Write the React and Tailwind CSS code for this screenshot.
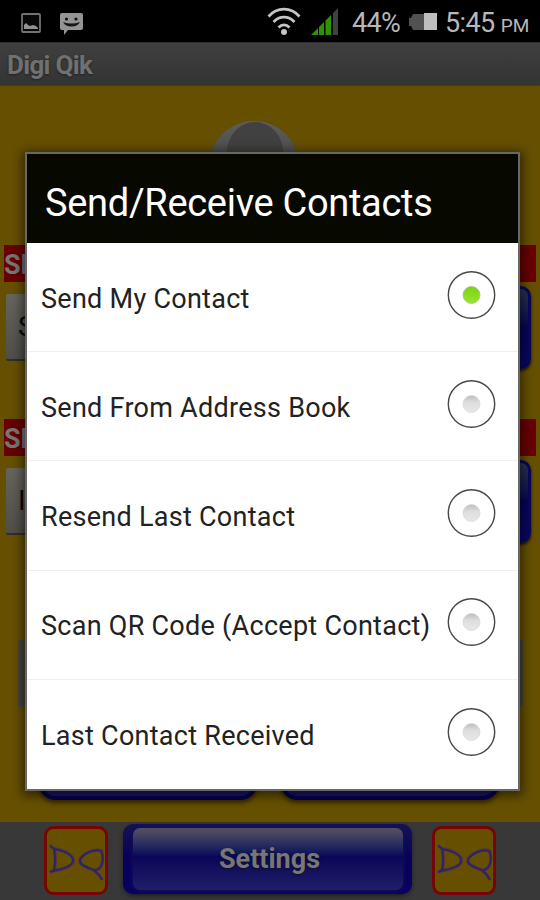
const options = [
  { label: 'Send My Contact', selected: true },
  { label: 'Send From Address Book' },
  { label: 'Resend Last Contact' },
  { label: 'Scan QR Code (Accept Contact)' },
  { label: 'Last Contact Received' },
];

function StatusBar() {
  return (
    <header className="flex h-[42px] items-center bg-black text-[#b8b8b8]">
      <svg className="mt-[3px] ml-[21px] h-[20px] w-[20px]" viewBox="0 0 20 20">
        <rect x="1" y="1" width="18" height="18" rx="1" fill="#080808" stroke="#727272" strokeWidth="1.800" />
        <path d="M3 16v-4l2-2 2 2 2 1 3-1 3 1 2 2v1z" fill="#929292" />
      </svg>
      <svg className="mt-[5px] ml-[19px] h-[22px] w-[23px]" viewBox="0 0 23 22">
        <path d="M2 0h19q2 0 2 2v13q0 2-2 2H8l-4 5v-5H2q-2 0-2-2V2q0-2 2-2z" fill="#949494" />
        <circle cx="6.500" cy="6" r="1.600" fill="#111" />
        <circle cx="16" cy="6" r="1.600" fill="#111" />
        <path d="M3 9q8.500 3 17 0-2.500 4.500-8.500 4.500T3 9z" fill="#151515" />
      </svg>
      <svg className="ml-[184px] h-[29px] w-[34px]" viewBox="0 0 34 29" fill="none" stroke="#c5c5c5" strokeWidth="2.700">
        <path d="M1.500 9.500C10-.3 24-.3 32.500 9.500M6.500 15c6-6.500 15-6.500 21 0M11.500 20.500c3.500-3.600 7.500-3.600 11 0" />
        <circle cx="17" cy="25" r="3" fill="#c5c5c5" stroke="none" />
      </svg>
      <svg className="ml-[10px] h-[27px] w-[28px]" viewBox="0 0 28 27">
        <path d="M0 27 7 20v7zM8 27v-8l5-5v13zM14.500 27V12.500L20 7v20z" fill="#2b9400" />
        <path d="M22 27V5l5-5v27z" fill="#414141" />
      </svg>
      <span className="mt-[5px] ml-[13px] w-[49px] text-[27px] leading-none tracking-[-0.700px] whitespace-nowrap">44%</span>
      <svg className="mt-[2px] ml-[8px] h-[18px] w-[28px]" viewBox="0 0 28 18">
        <path d="M4 1h12v16H4l-2-4H0V5h2z" fill="#515151" />
        <path d="M15 0h13v17H15z" fill="#bebebe" />
      </svg>
      <span className="mt-[5px] ml-[8px] text-[27px] leading-none tracking-[-0.600px] whitespace-nowrap">5:45</span>
      <span className="mt-[9px] ml-[6px] text-[19px] leading-none whitespace-nowrap">PM</span>
    </header>
  );
}

function FieldGroup({ heading, initial, first }) {
  return (
    <section className={first ? 'pt-[159px]' : 'pt-[49px]'}>
      <div className="mr-[4px] ml-[4px] flex h-[37px] items-center bg-[#680000] pt-[3px] text-[27px] font-bold text-[#777]">
        {heading}
      </div>
      <div className="mt-[4px] flex h-[84px] items-start justify-between pr-[9px] pl-[6px]">
        <div className="mt-[8px] flex h-[67px] w-[330px] items-center rounded-[2px] border-b-2 border-[#30302b] bg-linear-to-b from-[#66645d] to-[#4f4e49] pl-[12px] text-[28px] text-[#090909]">
          {initial}
        </div>
        <div className="h-[83px] w-[165px] rounded-[10px] border-[3px] border-[#08085a] bg-linear-to-b from-[#32314d] via-[#080354] to-[#0b0765] shadow-[0_2px_3px_#171307]" />
      </div>
    </section>
  );
}

function Logo() {
  return (
    <svg className="mt-[4px] h-[69px] w-[64px] shrink-0" viewBox="0 0 64 69" fill="none">
      <rect x="1.500" y="1.500" width="61" height="66" rx="8" fill="#665000" stroke="#790300" strokeWidth="2.800" />
      <g stroke="#642f3c" strokeWidth="3">
        <path d="M6 19.500 10.500 23q2 11 0 21.500L6 46.500" />
        <path d="M10 22.500C21 24 29.500 29 29.500 34.500S20 43.500 8 45" />
        <path d="M59 26C57 23.500 52 23.500 47 25S35.500 31 35.500 35 43 42 50 44.500Q55 48 58.500 54" />
        <path d="M57 25c2.500 4 2 11 .500 14-1 3-3.500 5-7 5.500" />
      </g>
      <g stroke="#27286c" strokeWidth="2.200">
        <path d="m6 19.500 4 3.500q2 11 0 21.500L6 46" />
        <path d="M10 23C20 25 29 29 29 34.500S19 43 8 45" />
        <path d="M58 26C56 24 52 24 47 25.500S36 31 36 35 43 41.500 50 44Q55 48 58 54" />
        <path d="M57.500 26c2 3 1.500 10 0 13s-3.500 5-7 5" />
      </g>
    </svg>
  );
}

function Backdrop() {
  return (
    <div className="flex h-full flex-col">
      <StatusBar />
      <div className="flex h-[44px] items-center border-t border-b border-t-[#303030] border-b-[#423b20] bg-linear-to-b from-[#3f3f3f] to-[#343434] pt-[2px] pl-[7px] text-[26px] font-bold tracking-[-0.700px] text-[#707070] [text-shadow:0_1px_2px_#222]">
        Digi Qik
      </div>
      <main className="relative h-[736px] overflow-hidden bg-[#665000]">
        <svg className="absolute top-[34px] left-[208px] h-[92px] w-[92px]" viewBox="0 0 92 92">
          <defs>
            <linearGradient id="avatar" x2="0" y2="1">
              <stop stopColor="#5d5d5d" />
              <stop offset=".5" stopColor="#484848" />
            </linearGradient>
          </defs>
          <circle cx="46" cy="46" r="45" fill="url(#avatar)" />
          <ellipse cx="47" cy="32" rx="28" ry="30" fill="#414141" />
        </svg>
        <FieldGroup heading="SEND" initial="S" first />
        <FieldGroup heading="SHARE" initial="I" />
        <div className="mt-[96px] mr-[17px] ml-[18px] h-[67px] rounded-[2px] bg-[#48473c]" />
        <div className="mt-[5px] flex justify-center gap-[22px] pr-[2px]">
          <div className="h-[88px] w-[220px] rounded-[18px] border-[4px] border-[#05004f] bg-[#1c1667] shadow-[0_3px_4px_#342900]" />
          <div className="h-[88px] w-[220px] rounded-[18px] border-[4px] border-[#05004f] bg-[#1c1667] shadow-[0_3px_4px_#342900]" />
        </div>
      </main>
      <footer className="flex h-[78px] items-start bg-[#383838] pl-[44px]">
        <Logo />
        <button className="mt-[2px] ml-[15px] flex h-[70px] w-[289px] items-center justify-center rounded-[10px] bg-[#09055b] bg-linear-to-b from-[#161255] via-[#08005a] to-[#080062] p-[4px] shadow-[0_2px_4px_#202020]">
          <span className="flex h-full w-[270px] items-center justify-center rounded-[7px] bg-linear-to-b from-[#504b60] from-[5%] via-[#0b0659] via-[46%] to-[#211d68] pt-[1px] pl-[4px] text-[27px] font-bold text-[#777] shadow-[0_0_4px_1px_#151057] [text-shadow:0_1px_2px_#111]">
            Settings
          </span>
        </button>
        <div className="ml-[20px]"><Logo /></div>
      </footer>
    </div>
  );
}

function Radio({ selected }) {
  return (
    <svg className="h-[50px] w-[50px] shrink-0" viewBox="0 0 50 50">
      <defs>
        <linearGradient id="on" x2="0" y2="1"><stop stopColor="#79d411" /><stop offset="1" stopColor="#98e52c" /></linearGradient>
        <linearGradient id="off" x2="0" y2="1"><stop stopColor="#bdbdbd" /><stop offset=".4" stopColor="#ddd" /><stop offset="1" stopColor="#e8e8e8" /></linearGradient>
      </defs>
      <circle cx="24.500" cy="24" r="23.200" fill="none" stroke="#484848" strokeWidth="1.400" />
      <circle cx="24.500" cy="24" r="8.500" fill={selected ? 'url(#on)' : 'url(#off)'} stroke={selected ? '#a8bd92' : '#d8d8d8'} strokeWidth=".8" />
    </svg>
  );
}

export default function App() {
  return (
    <div className="relative h-[900px] w-[540px] overflow-hidden font-[Roboto,sans-serif]">
      <Backdrop />
      <div role="dialog" className="absolute top-[152px] left-[25px] h-[639px] w-[495px] border-2 border-[#686868] bg-white shadow-[0_2px_10px_3px_rgba(0,0,0,0.5)]">
        <h1 className="flex h-[89px] items-center bg-[#070800] pt-[9px] pl-[18px] text-[38px] tracking-[-0.300px] whitespace-nowrap text-white">Send/Receive Contacts</h1>
        {options.map(({ label, selected }) => (
          <div key={label} className="flex h-[109.200px] items-center justify-between border-b border-[#f0f0f0] pr-[21px] pb-[3px] pl-[14px] last:border-b-0">
            <span className="pt-[7px] text-[27px] tracking-[0.270px] whitespace-nowrap text-[#222]">{label}</span>
            <Radio selected={selected} />
          </div>
        ))}
      </div>
    </div>
  );
}
